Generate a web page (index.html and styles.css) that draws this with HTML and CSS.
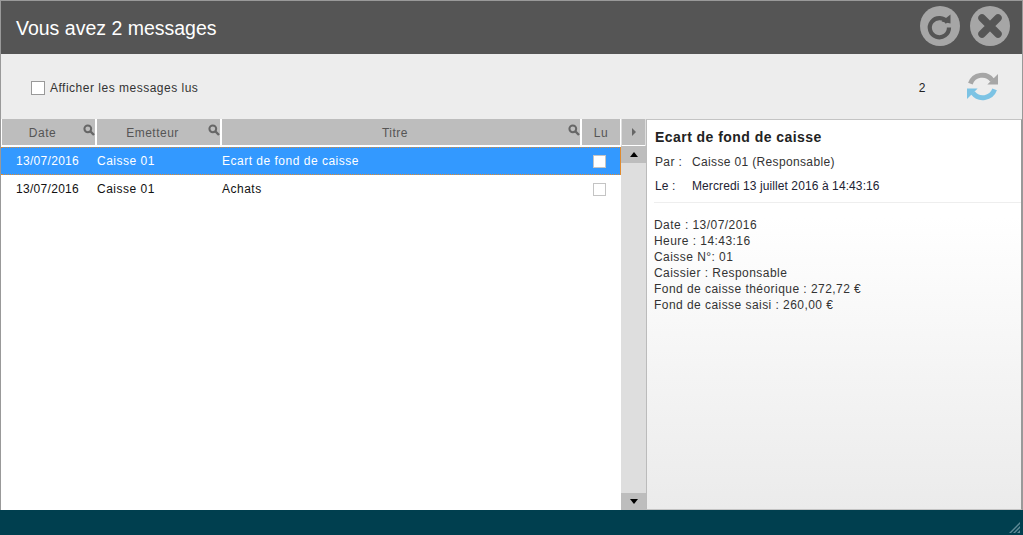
FILE: index.html
```html
<!DOCTYPE html>
<html lang="fr">
  <head>
    <meta charset="UTF-8" />
    <title>Messages</title>
    <link rel="stylesheet" href="styles.css">
  </head>
  <body>
    <div class="window">
      <div class="title-bar">
        <div class="title">Vous avez 2 messages</div>
        <div class="title-buttons">
          <div class="round-btn">
            <svg width="40" height="40" viewBox="0 0 40 40">
              <path d="M27.5 16.5A9.6 9.6 0 1 0 29 21.5" fill="none" stroke="#555" stroke-width="4.2" />
              <path d="M21.5 15.5L30.5 8.5V17.5Z" fill="#555" />
            </svg>
          </div>
          <div class="round-btn">
            <svg width="40" height="40" viewBox="0 0 40 40">
              <path d="M12 12L28 28M28 12L12 28" fill="none" stroke="#555" stroke-width="7.5" stroke-linecap="round" />
            </svg>
          </div>
        </div>
      </div>

      <div class="toolbar">
        <label class="show-read"><span class="check"></span>Afficher les messages lus</label>
        <span class="count">2</span>
        <svg class="refresh" width="33" height="33" viewBox="0 0 34 34">
          <path d="M4.5 14A13 13 0 0 1 27 10.5" fill="none" stroke="#a6a6a6" stroke-width="5" />
          <path d="M22 15H33V4Z" fill="#a6a6a6" />
          <path d="M29.5 20A13 13 0 0 1 7 23.5" fill="none" stroke="#7cc3e4" stroke-width="5" />
          <path d="M12 19H1V30Z" fill="#7cc3e4" />
        </svg>
      </div>

      <div class="content">
        <div class="grid">
          <div class="grid-head">
            <div class="col col-date">Date
              <svg class="loupe" width="12" height="12" viewBox="0 0 12 12"><circle cx="4.8" cy="4.8" r="3.4" fill="none" stroke="#666" stroke-width="2" /><path d="M7.5 7.5L11 11" stroke="#666" stroke-width="2.4" /></svg>
            </div>
            <div class="col col-from">Emetteur
              <svg class="loupe" width="12" height="12" viewBox="0 0 12 12"><circle cx="4.8" cy="4.8" r="3.4" fill="none" stroke="#666" stroke-width="2" /><path d="M7.5 7.5L11 11" stroke="#666" stroke-width="2.4" /></svg>
            </div>
            <div class="col col-title">Titre
              <svg class="loupe" width="12" height="12" viewBox="0 0 12 12"><circle cx="4.8" cy="4.8" r="3.4" fill="none" stroke="#666" stroke-width="2" /><path d="M7.5 7.5L11 11" stroke="#666" stroke-width="2.4" /></svg>
            </div>
            <div class="col col-read">Lu</div>
          </div>
          <div class="row row-selected">
            <div class="cell-date">13/07/2016</div>
            <div class="cell-from">Caisse 01</div>
            <div class="cell-title">Ecart de fond de caisse</div>
            <div class="cell-read"><span class="read-box"></span></div>
          </div>
          <div class="row">
            <div class="cell-date">13/07/2016</div>
            <div class="cell-from">Caisse 01</div>
            <div class="cell-title">Achats</div>
            <div class="cell-read"><span class="read-box"></span></div>
          </div>
        </div>

        <div class="scroll">
          <div class="scroll-corner"><span class="arrow-right"></span></div>
          <div class="scroll-btn"><span class="arrow-up"></span></div>
          <div class="scroll-track"></div>
          <div class="scroll-btn scroll-btn-down"><span class="arrow-down"></span></div>
        </div>

        <div class="detail">
          <div class="detail-head">
            <h2>Ecart de fond de caisse</h2>
            <div class="meta"><span class="meta-label">Par :</span>Caisse 01 (Responsable)</div>
            <div class="meta meta-date"><span class="meta-label">Le :</span>Mercredi 13 juillet 2016 à 14:43:16</div>
          </div>
          <div class="detail-body">
            <div>Date : 13/07/2016</div>
            <div>Heure : 14:43:16</div>
            <div>Caisse N°: 01</div>
            <div>Caissier : Responsable</div>
            <div>Fond de caisse théorique : 272,72 €</div>
            <div>Fond de caisse saisi : 260,00 €</div>
          </div>
        </div>
      </div>

      <div class="footer">
        <svg class="grip" width="11" height="11" viewBox="0 0 11 11">
          <path d="M0 11L11 0V2L2 11ZM4 11L11 4V6L6 11ZM8 11L11 8V11Z" fill="#5f8a96" />
        </svg>
      </div>
    </div>
  </body>
</html>
```

FILE: styles.css
```css
html, body {
  margin: 0;
  padding: 0;
}
body {
  font-family: "Liberation Sans", Arial, sans-serif;
  font-size: 12px;
  letter-spacing: 0.5px;
  color: #222;
  background: #fff;
}
.window {
  width: 1023px;
  height: 535px;
  box-sizing: border-box;
  display: flex;
  flex-direction: column;
  border: 1px solid #999;
  border-bottom: 0;
}

.title-bar {
  height: 53px;
  flex: none;
  background-color: #555;
  display: flex;
  align-items: center;
  justify-content: space-between;
  padding: 0 12px 0 15px;
}
.title {
  color: #fff;
  font-size: 19.5px;
  letter-spacing: 0;
  margin-top: 1px;
}
.title-buttons {
  display: flex;
  gap: 10px;
  margin-top: -3px;
}
.round-btn {
  width: 40px;
  height: 40px;
  border-radius: 50%;
  background-color: #a6a6a6;
}
.round-btn svg {
  display: block;
}

.toolbar {
  height: 65px;
  flex: none;
  box-sizing: border-box;
  background-color: #ededed;
  display: flex;
  align-items: center;
  padding: 2px 23px 0 30px;
}
.show-read {
  display: flex;
  align-items: center;
  color: #333;
  flex: 1;
}
.check {
  width: 12px;
  height: 12px;
  border: 1px solid #999;
  background-color: #fff;
  margin-right: 5px;
}
.count {
  margin-right: 40px;
  color: #222;
}
.refresh {
  display: block;
  margin-top: -2px;
}

.content {
  flex: 1;
  display: flex;
  min-height: 0;
  background-color: #fff;
}
.grid {
  width: 620px;
  flex: none;
}
.grid-head {
  display: flex;
  gap: 2px;
  height: 26px;
  padding-left: 1px;
  margin-bottom: 2px;
}
.col {
  position: relative;
  background-color: #bdbdbd;
  color: #555;
  text-align: center;
  line-height: 28px;
  box-sizing: border-box;
  padding-right: 12px;
}
.col-date {
  width: 93px;
}
.col-from {
  width: 123px;
}
.col-title {
  width: 358px;
}
.col-read {
  width: 38px;
  padding-right: 0;
  flex: none;
}
.loupe {
  position: absolute;
  right: 0;
  top: 5px;
}
.row {
  display: flex;
  height: 28px;
  box-sizing: border-box;
  align-items: center;
  color: #111;
}
.row-selected {
  background-color: #3399ff;
  color: #fff;
  border-top: 1px dotted #e08a2e;
  border-bottom: 1px dotted #e08a2e;
  border-right: 1px solid #e08a2e;
}
.cell-date {
  width: 96px;
  padding-left: 15px;
  box-sizing: border-box;
  letter-spacing: 0.3px;
}
.cell-from {
  width: 125px;
}
.cell-title {
  width: 360px;
}
.cell-read {
  flex: 1;
  display: flex;
  padding-left: 11px;
}
.read-box {
  width: 11px;
  height: 11px;
  border: 1px solid #c4c4c4;
  background-color: #fff;
}

.scroll {
  width: 25px;
  flex: none;
  display: flex;
  flex-direction: column;
  background-color: #dedede;
}
.scroll-corner {
  height: 26px;
  margin: 0 1px 0 1px;
  background-color: #bdbdbd;
  flex: none;
  display: flex;
  align-items: center;
  justify-content: center;
  border-bottom: 1px solid #fff;
}
.scroll-btn {
  height: 17px;
  flex: none;
  background-color: #bdbdbd;
  display: flex;
  align-items: center;
  justify-content: center;
}
.scroll-track {
  flex: 1;
}
.arrow-right {
  border-left: 4px solid #666;
  border-top: 4px solid transparent;
  border-bottom: 4px solid transparent;
}
.arrow-up {
  border-bottom: 5px solid #000;
  border-left: 4px solid transparent;
  border-right: 4px solid transparent;
}
.arrow-down {
  border-top: 5px solid #000;
  border-left: 4px solid transparent;
  border-right: 4px solid transparent;
}

.detail {
  flex: 1;
  box-sizing: border-box;
  border: 1px solid #c4c4c4;
  border-left: 1px solid #bbb;
  border-right: 1px solid #999;
  background: linear-gradient(#ffffff, #ffffff 25%, #ebebeb);
  padding: 0 0 0 7px;
  letter-spacing: 0.45px;
}
.detail-head {
  border-bottom: 1px solid #eee;
  height: 83px;
  box-sizing: border-box;
  padding: 9px 0 0 1px;
}
.detail-head h2 {
  margin: 0 0 9px;
  font-size: 14px;
  line-height: 16px;
  color: #222;
}
.meta {
  line-height: 16px;
  color: #333;
  display: flex;
  margin-bottom: 8px;
  letter-spacing: 0.35px;
}
.meta-label {
  width: 37px;
  flex: none;
}
.meta-date {
  color: #223;
  letter-spacing: 0.1px;
}
.detail-body {
  padding-top: 14px;
  line-height: 16px;
  color: #333;
}

.footer {
  height: 25px;
  flex: none;
  box-sizing: border-box;
  margin: 0 -1px;
  background-color: #003f4f;
  display: flex;
  justify-content: flex-end;
  align-items: flex-end;
  padding: 0 3px 2px 0;
}
```
